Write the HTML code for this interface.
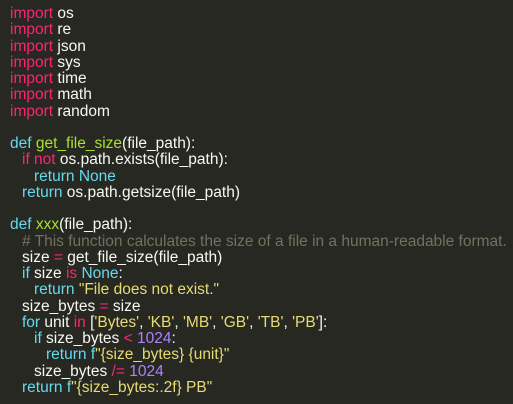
<!DOCTYPE html>
<html><head><meta charset="utf-8"><style>
html,body{margin:0;padding:0;background:#272822;width:513px;height:404px;overflow:hidden}
.c{position:absolute;left:10px;top:6px;font-family:"Liberation Sans",sans-serif;font-size:15.5px;line-height:16.25px;color:#f8f8f2}
.l{height:16.25px;white-space:pre}
.i1{padding-left:12px}.i2{padding-left:24px}.i3{padding-left:36px}
.k{color:#f92672}.b{color:#66d9ef}.s{color:#e6db74}.n{color:#ae81ff}.f{color:#a6e22e}.m{color:#75715e}
</style></head><body><div class="c">
<div class="l"><span class="k">import</span> os</div>
<div class="l"><span class="k">import</span> re</div>
<div class="l"><span class="k">import</span> json</div>
<div class="l"><span class="k">import</span> sys</div>
<div class="l"><span class="k">import</span> time</div>
<div class="l"><span class="k">import</span> math</div>
<div class="l"><span class="k">import</span> random</div>
<div class="l"></div>
<div class="l"><span class="b">def</span> <span class="f">get_file_size</span>(file_path):</div>
<div class="l i1"><span class="k">if not</span> os.path.exists(file_path):</div>
<div class="l i2"><span class="b">return</span> <span class="b">None</span></div>
<div class="l i1"><span class="b">return</span> os.path.getsize(file_path)</div>
<div class="l"></div>
<div class="l"><span class="b">def</span> <span class="f">xxx</span>(file_path):</div>
<div class="l i1"><span class="m"># This function calculates the size of a file in a human-readable format.</span></div>
<div class="l i1">size <span class="k">=</span> get_file_size(file_path)</div>
<div class="l i1"><span class="b">if</span> size <span class="k">is</span> <span class="b">None</span>:</div>
<div class="l i2"><span class="b">return</span> <span class="s">"File does not exist."</span></div>
<div class="l i1">size_bytes <span class="k">=</span> size</div>
<div class="l i1"><span class="b">for</span> unit <span class="k">in</span> [<span class="s">'Bytes'</span>, <span class="s">'KB'</span>, <span class="s">'MB'</span>, <span class="s">'GB'</span>, <span class="s">'TB'</span>, <span class="s">'PB'</span>]:</div>
<div class="l i2"><span class="b">if</span> size_bytes <span class="k">&lt;</span> <span class="n">1024</span>:</div>
<div class="l i3"><span class="b">return</span> <span class="b">f</span><span class="s">"{size_bytes} {unit}"</span></div>
<div class="l i2">size_bytes <span class="k">/=</span> <span class="n">1024</span></div>
<div class="l i1"><span class="b">return</span> <span class="b">f</span><span class="s">"{size_bytes:.2f} PB"</span></div>
</div></body></html>
